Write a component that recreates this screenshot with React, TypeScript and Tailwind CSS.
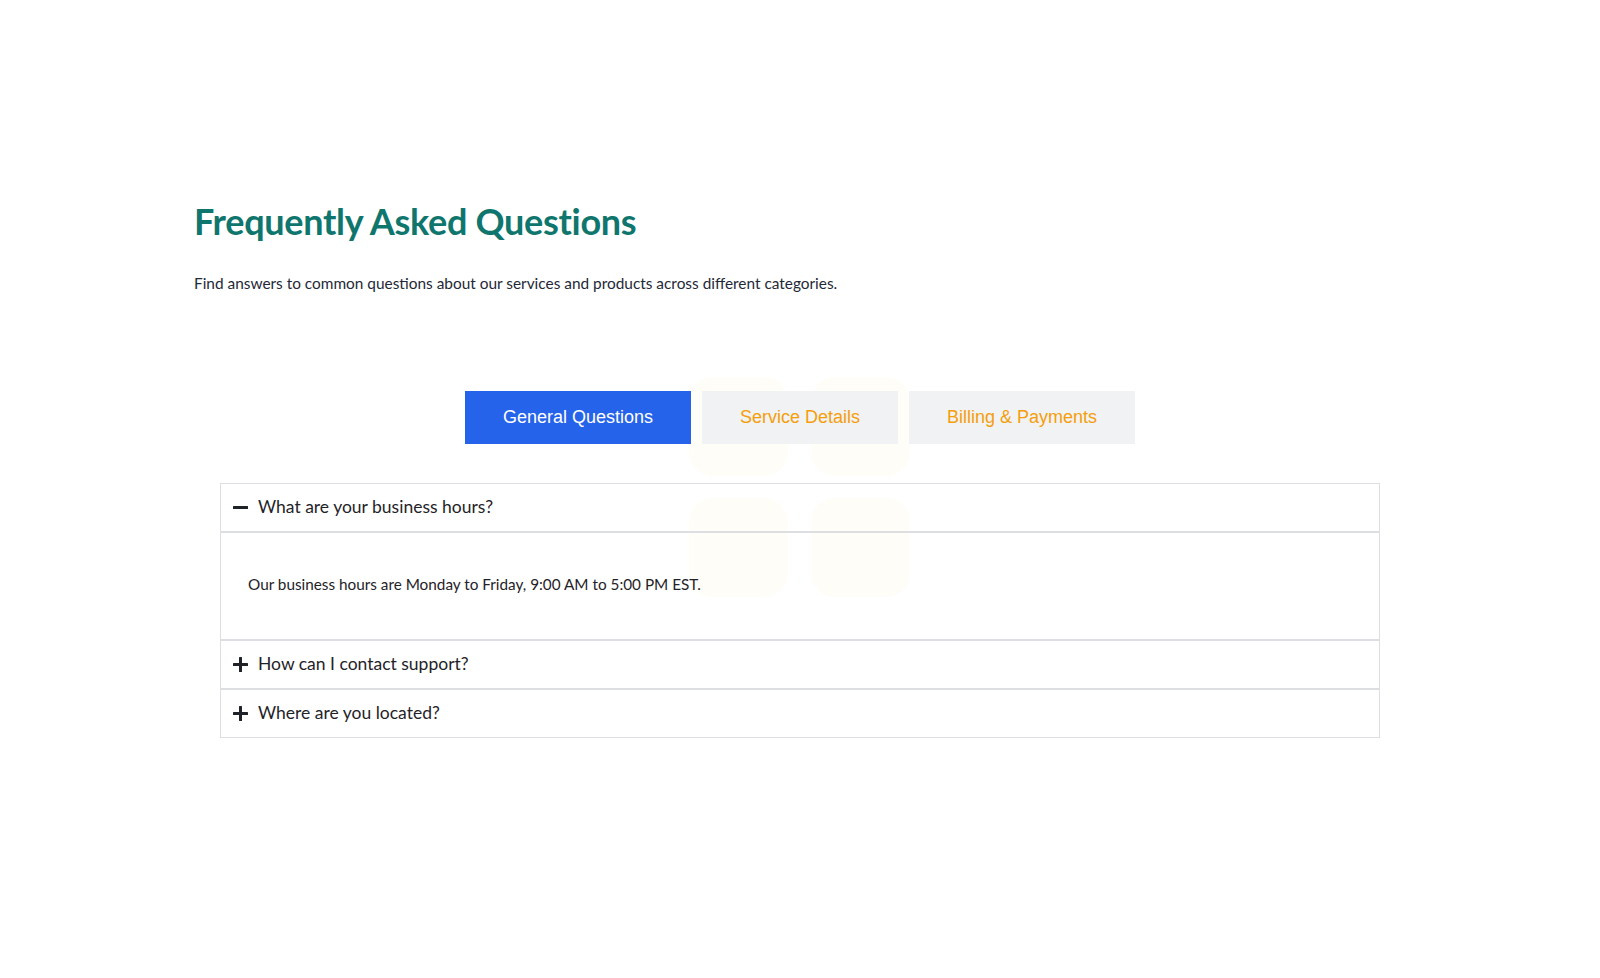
import React, { useState } from 'react';

const tabs = [
    { id: 'general', name: 'General Questions' },
    { id: 'service', name: 'Service Details' },
    { id: 'billing', name: 'Billing & Payments' },
];

const faqs: Record<string, { q: string; a: string }[]> = {
    general: [
        { q: 'What are your business hours?', a: 'Our business hours are Monday to Friday, 9:00 AM to 5:00 PM EST.' },
        { q: 'How can I contact support?', a: 'You can reach our support team by email or phone during business hours.' },
        { q: 'Where are you located?', a: 'Our main office is located downtown.' },
    ],
    service: [
        { q: 'What services do you offer?', a: 'We offer a wide range of services.' },
    ],
    billing: [
        { q: 'What payment methods do you accept?', a: 'We accept all major credit cards.' },
    ],
};

const MinusIcon = () => (
    <svg width="15" height="15" viewBox="0 0 15 15" className="shrink-0">
        <rect x="0" y="6" width="15" height="3" rx="0.5" fill="#1f2328" />
    </svg>
);

const PlusIcon = () => (
    <svg width="15" height="15" viewBox="0 0 15 15" className="shrink-0">
        <rect x="0" y="6" width="15" height="3" rx="0.5" fill="#1f2328" />
        <rect x="6" y="0" width="3" height="15" rx="0.5" fill="#1f2328" />
    </svg>
);

export default function App() {
    const [active, setActive] = useState('general');
    const [open, setOpen] = useState<number | null>(0);

    return (
        <div className="min-h-screen bg-white font-['Lato','Noto_Sans',sans-serif] text-gray-800">
            <section className="max-w-7xl mx-auto pl-[34px] pr-8 pt-[199px]">
                <h1 className="text-[36px] leading-[44px] font-bold text-[#0f766e] tracking-[-0.3px]">
                    Frequently Asked Questions
                </h1>
                <p className="mt-[28px] text-[15.4px] leading-[24px] text-[#1f2937]">
                    Find answers to common questions about our services and products across different categories.
                </p>
            </section>

            <div className="relative mt-[96px]">
                {/* faint decorative tiles */}
                <div className="absolute left-[689px] top-[-14px] grid grid-cols-2 gap-x-[23px] gap-y-[22px] pointer-events-none">
                    <div className="w-[99px] h-[99px] rounded-[24px] bg-[#fefdf7]" />
                    <div className="w-[99px] h-[99px] rounded-[24px] bg-[#fefdf7]" />
                    <div className="w-[99px] h-[99px] rounded-[24px] bg-[#fefdf7]" />
                    <div className="w-[99px] h-[99px] rounded-[24px] bg-[#fefdf7]" />
                </div>

                <div className="relative flex justify-center gap-[11px]">
                    {tabs.map((tab) => (
                        <button
                            key={tab.id}
                            onClick={() => { setActive(tab.id); setOpen(0); }}
                            className={`h-[53px] px-[38px] text-[18px] font-['Liberation_Sans',Arial,sans-serif] ${active === tab.id
                                ? 'bg-[#2563eb] text-white'
                                : 'bg-[#f1f2f4] text-[#f59e0b]'
                                }`}
                        >
                            {tab.name}
                        </button>
                    ))}
                </div>

                <div className="relative max-w-[1160px] mx-auto mt-[39px]">
                    {faqs[active].map((item, i) => (
                        <div key={item.q} className="border border-[#dcdee2]">
                            <button
                                onClick={() => setOpen(open === i ? null : i)}
                                className="w-full h-[47px] flex items-center gap-[10px] pl-[12px] text-left text-[17.5px] text-[#1f2328]"
                            >
                                {open === i ? <MinusIcon /> : <PlusIcon />}
                                {item.q}
                            </button>
                            {open === i && (
                                <div className="border-t-2 border-[#dcdee2] h-[108px] flex items-center px-[27px] pb-[4px] text-[15.3px] text-[#1f2328]">
                                    {item.a}
                                </div>
                            )}
                        </div>
                    ))}
                </div>
            </div>
        </div>
    );
}
